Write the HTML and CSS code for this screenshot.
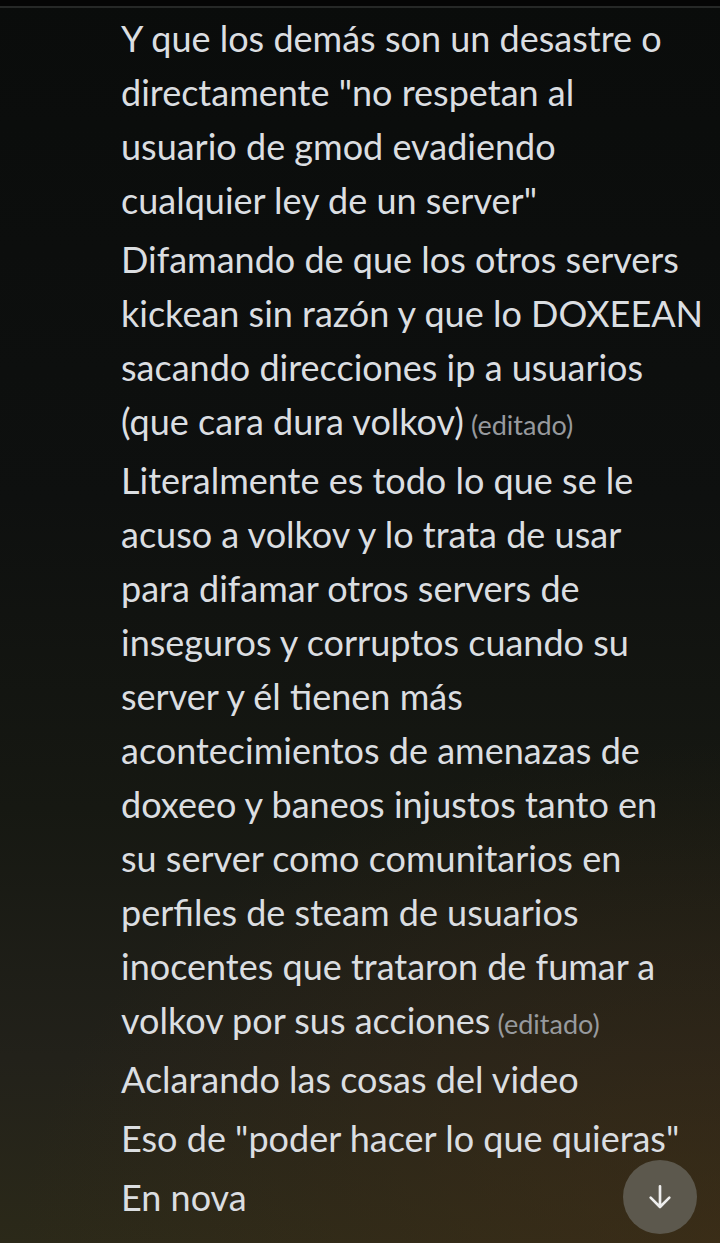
FILE: index.html
```html
<!DOCTYPE html>
<html lang="es">
<head>
<meta charset="utf-8">
<link rel="stylesheet" href="styles.css">
</head>
<body>
<div class="topbar"></div>
<main class="chat">
  <div class="msg">Y que los demás son un desastre o<br>directamente "no respetan al<br>usuario de gmod evadiendo<br>cualquier ley de un server"</div>
  <div class="msg">Difamando de que los otros servers<br>kickean sin razón y que lo DOXEEAN<br>sacando direcciones ip a usuarios<br>(que cara dura volkov) <span class="edited">(editado)</span></div>
  <div class="msg">Literalmente es todo lo que se le<br>acuso a volkov y lo trata de usar<br>para difamar otros servers de<br>inseguros y corruptos cuando su<br>server y él tienen más<br>acontecimientos de amenazas de<br>doxeeo y baneos injustos tanto en<br>su server como comunitarios en<br>perfiles de steam de usuarios<br>inocentes que trataron de fumar a<br>volkov por sus acciones <span class="edited">(editado)</span></div>
  <div class="msg">Aclarando las cosas del video</div>
  <div class="msg">Eso de "poder hacer lo que quieras"</div>
  <div class="msg">En nova</div>
  <div class="msg">En cuanto a eso</div>
</main>
<button class="jump" aria-label="Ir abajo">
  <svg viewBox="0 0 24 24" width="32" height="32"><path d="M12 4v15M5 12.5l7 7 7-7" fill="none" stroke="#eeeeee" stroke-width="2" stroke-linecap="round" stroke-linejoin="round"/></svg>
</button>
</body>
</html>
```
FILE: styles.css
```css
html, body {
  margin: 0;
  padding: 0;
  height: 100%;
}
body {
  width: 720px;
  height: 1243px;
  overflow: hidden;
  position: relative;
  font-family: "Lato", "Noto Sans", sans-serif;
  color: #dbdee1;
  background:
    radial-gradient(ellipse 700px 500px at 100% 100%, rgba(70, 48, 22, 0.55), rgba(70, 48, 22, 0) 100%),
    linear-gradient(180deg, #0a0c0b 0%, #0e100f 40%, #161812 65%, #22211a 85%, #2b2919 100%);
}
.topbar {
  height: 6px;
  background: #050505;
  border-bottom: 2px solid #262827;
}
.chat {
  padding: 3px 0 0 121px;
}
.msg {
  font-size: 36px;
  line-height: 54px;
  white-space: nowrap;
  padding-bottom: 5px;
}
.edited {
  font-size: 27px;
  line-height: 1;
  color: #979a9e;
  margin-left: -2px;
}
.jump {
  position: absolute;
  left: 623px;
  top: 1160px;
  width: 74px;
  height: 74px;
  border-radius: 50%;
  border: none;
  background: #5c584d;
  display: flex;
  align-items: center;
  justify-content: center;
  padding: 0;
}
```
